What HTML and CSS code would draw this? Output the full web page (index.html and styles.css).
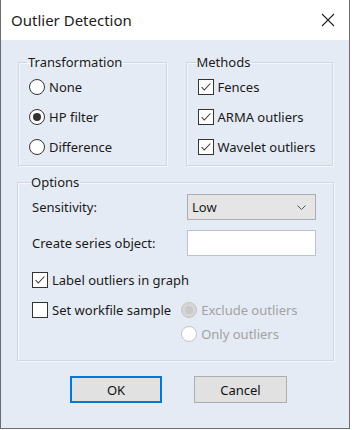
FILE: index.html
```html
<!DOCTYPE html>
<html lang="en">
<head>
  <meta charset="UTF-8">
  <meta name="viewport" content="width=device-width, initial-scale=1.0">
  <title>Outlier Detection</title>
  <link rel="stylesheet" href="styles.css">
</head>
<body>
  <div class="window">
    <div class="titlebar">
      <span class="title">Outlier Detection</span>
      <svg class="close" width="14" height="14" viewBox="0 0 14 14"><path d="M1 1L13 13M13 1L1 13"/></svg>
    </div>

    <div class="content">
      <div class="top-row">
        <fieldset class="group transform">
          <legend>Transformation</legend>
          <label class="opt"><span class="radio"></span>None</label>
          <label class="opt"><span class="radio checked"></span>HP filter</label>
          <label class="opt"><span class="radio"></span>Difference</label>
        </fieldset>

        <fieldset class="group methods">
          <legend>Methods</legend>
          <label class="opt"><span class="check"><svg viewBox="0 0 16 16"><path d="M3 8l3 3.5 7-7.5"/></svg></span>Fences</label>
          <label class="opt"><span class="check"><svg viewBox="0 0 16 16"><path d="M3 8l3 3.5 7-7.5"/></svg></span>ARMA outliers</label>
          <label class="opt"><span class="check"><svg viewBox="0 0 16 16"><path d="M3 8l3 3.5 7-7.5"/></svg></span>Wavelet outliers</label>
        </fieldset>
      </div>

      <fieldset class="group options">
        <legend>Options</legend>
        <div class="field">
          <span class="field-label">Sensitivity:</span>
          <div class="select">
            <span>Low</span>
            <svg class="chevron" width="9" height="5" viewBox="0 0 9 5"><path d="M0.5 0.5L4.5 4.5 8.5 0.5"/></svg>
          </div>
        </div>
        <div class="field second">
          <span class="field-label">Create series object:</span>
          <div class="input"></div>
        </div>

        <label class="opt small label-row"><span class="check"><svg viewBox="0 0 16 16"><path d="M3 8l3 3.5 7-7.5"/></svg></span>Label outliers in graph</label>

        <div class="sample-row">
          <label class="opt small"><span class="check"></span>Set workfile sample</label>
          <div class="sample-opts">
            <label class="opt small disabled"><span class="radio checked"></span>Exclude outliers</label>
            <label class="opt small disabled"><span class="radio"></span>Only outliers</label>
          </div>
        </div>
      </fieldset>

      <div class="buttons">
        <button class="btn default">OK</button>
        <button class="btn">Cancel</button>
      </div>
    </div>
  </div>
</body>
</html>
```

FILE: styles.css
```css
:root {
  --face: #e5ebf4;
  --line: #d0d7e1;
  --text: #1a1a1a;
  --muted: #a2a2a2;
  --accent: #0078d7;
}

* {
  margin: 0;
  padding: 0;
  box-sizing: border-box;
}

body {
  font-family: "Noto Sans", "Liberation Sans", sans-serif;
  font-size: 13px;
  color: var(--text);
  background: #fff;
}

.window {
  width: 350px;
  height: 429px;
  display: flex;
  flex-direction: column;
  border: 1px solid #6d6d6d;
  border-top: none;
}

.titlebar {
  height: 40px;
  background: #fff;
  display: flex;
  align-items: center;
  padding: 0 14px 0 10px;
}

.title {
  font-size: 15px;
  color: #222;
}

.close {
  margin-left: auto;
  fill: none;
  stroke: #222;
  stroke-width: 1.1;
}

.content {
  flex: 1;
  background: var(--face);
  padding: 15px 16px 0;
}

.top-row {
  display: flex;
  gap: 19px;
  padding-left: 1px;
}

.group {
  border: 1px solid var(--line);
  box-shadow: inset 1px 1px 0 #f4f7fb, 1px 1px 0 #f4f7fb;
  padding: 2px 10px 3px;
  min-width: 0;
}

.group legend {
  line-height: 15px;
  padding: 0 1px;
  margin-left: -2px;
}

.transform {
  width: 149px;
}

.methods {
  width: 148px;
  padding-left: 11px;
}

.opt {
  display: flex;
  align-items: center;
  gap: 4px;
  height: 30px;
  white-space: nowrap;
}

.opt.small {
  height: 24px;
}

.radio {
  width: 16px;
  height: 16px;
  border: 1px solid #333;
  border-radius: 50%;
  background: #fff;
  display: flex;
  align-items: center;
  justify-content: center;
  flex-shrink: 0;
}

.radio.checked::after {
  content: "";
  width: 8px;
  height: 8px;
  border-radius: 50%;
  background: #333;
}

.check {
  width: 16px;
  height: 16px;
  border: 1px solid #333;
  background: #fff;
  flex-shrink: 0;
  display: flex;
}

.check svg {
  width: 14px;
  height: 14px;
  fill: none;
  stroke: #333;
  stroke-width: 1.2;
}

.disabled {
  color: var(--muted);
}

.disabled .radio {
  border-color: #c4c4c4;
}

.disabled .radio.checked {
  background: #d6d6d6;
}

.disabled .radio.checked::after {
  background: #c8c8c8;
}

.options {
  margin-top: 9px;
  width: 317px;
  padding: 4px 14px 14px;
}

.field {
  display: flex;
  align-items: center;
  height: 26px;
}

.field.second {
  margin-top: 10px;
}

.field-label {
  width: 155px;
}

.select {
  width: 129px;
  height: 26px;
  background: #e5e5e5;
  border: 1px solid #adadad;
  display: flex;
  align-items: center;
  padding: 0 9px 0 4px;
}

.chevron {
  margin-left: auto;
  fill: none;
  stroke: #555;
}

.input {
  width: 129px;
  height: 26px;
  background: #fff;
  border: 1px solid #bcc2cb;
}

.label-row {
  margin-top: 12px;
}

.sample-row {
  display: flex;
  margin-top: 6px;
}

.sample-opts {
  margin-left: 10px;
}

.buttons {
  display: flex;
  gap: 32px;
  margin-top: 15px;
  padding-left: 53px;
}

.btn {
  width: 92px;
  height: 27px;
  background: #e1e1e1;
  border: 1px solid #adadad;
  font: inherit;
  color: #111;
}

.btn + .btn {
  width: 93px;
}

.btn.default {
  border: 2px solid var(--accent);
}
```
